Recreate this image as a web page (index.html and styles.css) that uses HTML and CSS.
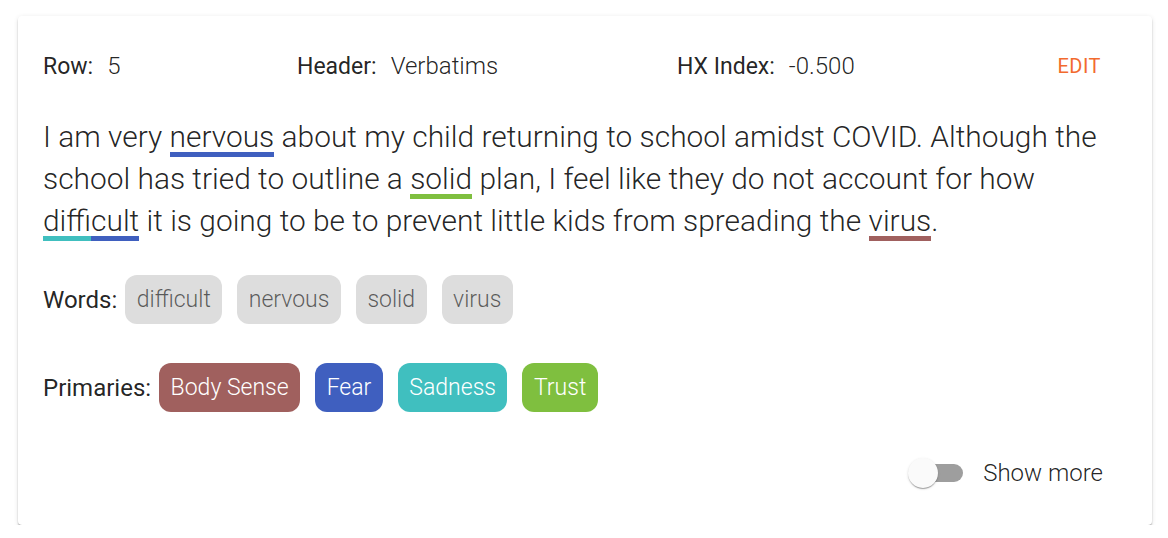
FILE: index.html
```html
<!DOCTYPE html>
<html lang="en">
<head>
<meta charset="utf-8">
<title>Verbatim card</title>
<link rel="stylesheet" href="styles.css">
</head>
<body>
<div class="card">
  <div class="meta">
    <div class="field"><span class="label">Row:</span><span class="value">5</span></div>
    <div class="field"><span class="label">Header:</span><span class="value">Verbatims</span></div>
    <div class="field"><span class="label">HX Index:</span><span class="value">-0.500</span></div>
    <button class="edit">EDIT</button>
  </div>
  <p class="verbatim">I am very <span class="hl fear">nervous</span> about my child returning to school amidst COVID. Although the school has tried to outline a <span class="hl trust">solid</span> plan, I feel like they do not account for how <span class="hl sad-fear">difficult</span> it is going to be to prevent little kids from spreading the <span class="hl body">virus</span>.</p>
  <div class="chip-row">
    <span class="label">Words:</span>
    <span class="chip word">difficult</span>
    <span class="chip word">nervous</span>
    <span class="chip word">solid</span>
    <span class="chip word">virus</span>
  </div>
  <div class="chip-row primaries">
    <span class="label">Primaries:</span>
    <span class="chip c-body">Body Sense</span>
    <span class="chip c-fear">Fear</span>
    <span class="chip c-sad">Sadness</span>
    <span class="chip c-trust">Trust</span>
  </div>
  <div class="footer">
    <label class="switch">
      <span class="track"></span>
      <span class="thumb"></span>
    </label>
    <span class="show-more">Show more</span>
  </div>
</div>
</body>
</html>
```
FILE: styles.css
```css
html, body {
  margin: 0;
  padding: 0;
  background: #ffffff;
}
body {
  font-family: Roboto, "Liberation Sans", sans-serif;
  color: rgba(0, 0, 0, 0.87);
  padding: 16px 16px 0 18px;
}
.card {
  background: #fff;
  border-radius: 4px;
  box-shadow: 0 2px 2px -1px rgba(0,0,0,0.4), 0 2px 2px 0 rgba(0,0,0,0.12), 0 1px 5px 0 rgba(0,0,0,0.10);
  padding: 32px 25px 28px 25px;
}
.meta {
  display: grid;
  grid-template-columns: 254px 380px 1fr auto;
  align-items: center;
  height: 36px;
  padding-right: 26px;
  font-size: 23px;
}
.label {
  font-weight: 400;
}
.value {
  font-weight: 300;
  font-size: 24px;
  margin-left: 14px;
}
.edit {
  font-family: inherit;
  font-size: 20px;
  font-weight: 400;
  color: #f26a2e;
  background: none;
  border: none;
  padding: 0;
  letter-spacing: 0.5px;
}
.verbatim {
  margin: 32px 0 0 0;
  font-size: 29.9px;
  font-weight: 300;
  line-height: 42px;
}
.hl {
  padding-bottom: 3px;
  background-repeat: no-repeat;
  background-position: left bottom;
  background-size: 100% 5px;
}
.fear { background-image: linear-gradient(#3f5fbf, #3f5fbf); }
.trust { background-image: linear-gradient(#7fbf3f, #7fbf3f); }
.body { background-image: linear-gradient(#a0605e, #a0605e); }
.sad-fear { background-image: linear-gradient(to right, #40bfbf 50%, #3f5fbf 50%); }
.chip-row {
  display: flex;
  align-items: center;
  gap: 15px;
  margin-top: 33px;
  font-size: 24px;
}
.chip-row .label {
  margin-right: -7px;
}
.primaries {
  margin-top: 39px;
}
.chip {
  display: inline-flex;
  align-items: center;
  height: 49px;
  padding: 0 11.5px;
  border-radius: 12px;
  font-weight: 300;
  font-size: 23px;
}
.word {
  background: #dddddd;
  color: rgba(0, 0, 0, 0.6);
}
.c-body { background: #a0605e; color: #fff; }
.c-fear { background: #3f5fbf; color: #fff; }
.c-sad { background: #40bfbf; color: #fff; }
.c-trust { background: #7fbf3f; color: #fff; }
.footer {
  display: flex;
  justify-content: flex-end;
  align-items: center;
  gap: 20px;
  height: 48px;
  margin-top: 37px;
  padding-right: 24px;
}
.switch {
  position: relative;
  width: 55px;
  height: 30px;
  display: flex;
  align-items: center;
}
.track {
  display: block;
  margin-left: 4px;
  width: 51px;
  height: 18px;
  border-radius: 9px;
  background: #9e9e9e;
}
.thumb {
  position: absolute;
  left: 0;
  top: 0;
  width: 30px;
  height: 30px;
  border-radius: 50%;
  background: #fafafa;
  box-shadow: 0 2px 1px -1px rgba(0,0,0,0.2), 0 1px 1px 0 rgba(0,0,0,0.14), 0 1px 3px 0 rgba(0,0,0,0.12);
}
.show-more {
  font-size: 24px;
  font-weight: 300;
}
```
